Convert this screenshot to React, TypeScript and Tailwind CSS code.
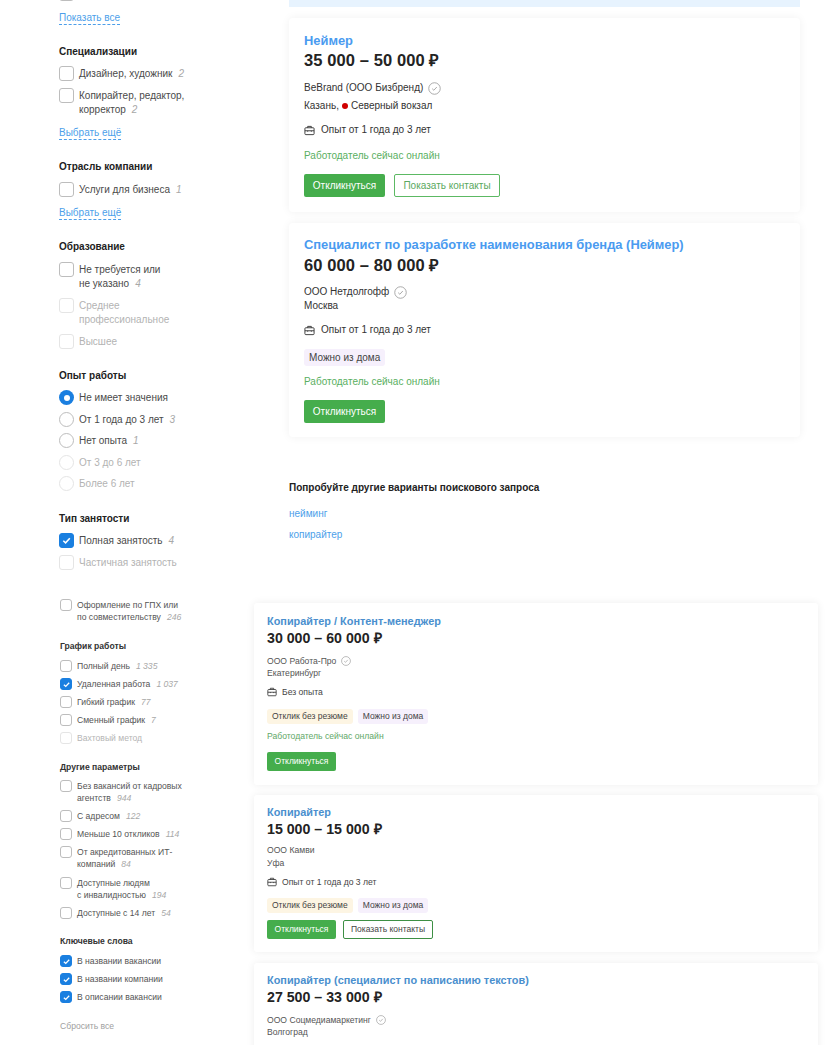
const F = "font-['Liberation_Sans',Arial,sans-serif]";

function Check({ on, dim, size = 15 }: { on?: boolean; dim?: boolean; size?: number }) {
  const box = size === 15 ? "w-[15px] h-[15px]" : "w-[12px] h-[12px]";
  return (
    <span className={`${box} shrink-0 rounded-[3px] border flex items-center justify-center ${on ? "bg-[#1a7fe0] border-[#1a7fe0]" : dim ? "bg-white border-[#e5e5e5]" : "bg-white border-[#bdbdbd]"}`}>
      {on && (
        <svg viewBox="0 0 12 12" className={size === 15 ? "w-[11px] h-[11px]" : "w-[9px] h-[9px]"} fill="none" stroke="#fff" strokeWidth="1.7">
          <path d="M2.5 6.3 5 8.6 9.6 3.6" />
        </svg>
      )}
    </span>
  );
}

function Radio({ on, dim }: { on?: boolean; dim?: boolean }) {
  return (
    <span className={`w-[15px] h-[15px] shrink-0 rounded-full flex items-center justify-center ${on ? "bg-[#1a7fe0]" : dim ? "border border-[#e5e5e5]" : "border border-[#bdbdbd]"}`}>
      {on && <span className="w-[6px] h-[6px] rounded-full bg-white" />}
    </span>
  );
}

function Row({ lines, n, on, dim, radio, h = 21.5 }: { lines: string[]; n?: string; on?: boolean; dim?: boolean; radio?: boolean; h?: number }) {
  return (
    <div className="flex gap-[5px] items-start" style={{ height: h }}>
      <div>{radio ? <Radio on={on} dim={dim} /> : <Check on={on} dim={dim} />}</div>
      <div className={`text-[10px] leading-[14px] pt-[1px] ${dim ? "text-[#b3b3b3]" : "text-[#4a4a4a]"}`}>
        {lines.map((l, i) => (
          <div key={i} className="whitespace-nowrap">
            {l}
            {i === lines.length - 1 && n && <i className="text-[#a8a8a8] ml-[6px] text-[10px]">{n}</i>}
          </div>
        ))}
      </div>
    </div>
  );
}

function Head({ children }: { children: string }) {
  return <div className="text-[10px] leading-[14px] font-bold text-[#222] h-[14px]">{children}</div>;
}

function More({ children }: { children: string }) {
  return <span className="text-[10px] leading-[13px] inline-block text-[#4d9fea] border-b border-dashed border-[#4d9fea]">{children}</span>;
}

function Verified({ size = 13 }: { size?: number }) {
  return (
    <svg viewBox="0 0 14 14" style={{ width: size, height: size }} fill="none" stroke="#9a9a9a" strokeWidth="0.9" className="shrink-0">
      <circle cx="7" cy="7" r="6.2" />
      <path d="M4.5 7.2 6.3 8.9 9.5 5.4" />
    </svg>
  );
}

function Case({ size = 11 }: { size?: number }) {
  return (
    <svg viewBox="0 0 12 12" style={{ width: size, height: size }} fill="none" stroke="#333" strokeWidth="1" className="shrink-0">
      <rect x="1" y="3" width="10" height="7.5" rx="1" />
      <path d="M4 3V1.5h4V3M1 6.3h10M4 6.3v1M8 6.3v1" />
    </svg>
  );
}

function TopCard({ title, salary, className, salaryClass, children }: { title: string; salary: string; className: string; salaryClass: string; children: React.ReactNode }) {
  return (
    <div className={`bg-white rounded-[4px] shadow-[0_0_10px_rgba(0,0,0,0.06)] px-[15px] ${className}`}>
      <div className="text-[12.9px] leading-[15px] font-bold text-[#4a9bf0] whitespace-nowrap">{title}</div>
      <div className={`text-[16.5px] leading-[20px] font-bold text-[#232323] tracking-[0.1px] ${salaryClass}`}>{salary}</div>
      {children}
    </div>
  );
}

function TopInfo({ children, className = "" }: { children: React.ReactNode; className?: string }) {
  return <div className={`flex items-center text-[10px] leading-[14px] text-[#333] ${className}`}>{children}</div>;
}

function GreenBtn({ small }: { small?: boolean }) {
  return <span className={`${small ? "w-[69px] h-[19px] text-[8.5px]" : "w-[81px] h-[23px] text-[10px]"} inline-flex items-center justify-center bg-[#45ad4c] rounded-[2px] text-white`}>Откликнуться</span>;
}

function Contacts({ small }: { small?: boolean }) {
  return <span className={`${small ? "w-[90px] h-[19px] text-[8.5px] border-[#3d8f44] text-[#444]" : "w-[106px] h-[23px] text-[10px] border-[#5cb963] text-[#5aa860]"} inline-flex items-center justify-center border rounded-[2px] bg-white`}>Показать контакты</span>;
}

function Tag({ children, tone }: { children: string; tone: "p" | "y" }) {
  return <span className={`inline-flex items-center h-[15px] px-[5px] rounded-[3px] text-[8.5px] text-[#444] ${tone === "p" ? "bg-[#f6f0fc]" : "bg-[#fdf5e3]"}`}>{children}</span>;
}

function SmallRow({ lines, n, on, dim, h = 18 }: { lines: string[]; n?: string; on?: boolean; dim?: boolean; h?: number }) {
  return (
    <div className="flex gap-[5px] items-start" style={{ height: h }}>
      <div><Check on={on} dim={dim} size={12} /></div>
      <div className={`text-[8.6px] leading-[12px] ${dim ? "text-[#b5b5b5]" : "text-[#555]"}`}>
        {lines.map((l, i) => (
          <div key={i} className="whitespace-nowrap">
            {l}
            {i === lines.length - 1 && n && <i className="text-[#a8a8a8] ml-[6px]">{n}</i>}
          </div>
        ))}
      </div>
    </div>
  );
}

function SmallHead({ children }: { children: string }) {
  return <div className="text-[8.6px] leading-[12px] h-[12px] font-bold text-[#333]">{children}</div>;
}

function BottomCard({ title, salary, company, city, exp, className, tight, noVerify, children }: { title: string; salary: string; company: string; city: string; exp?: string; className: string; tight?: boolean; noVerify?: boolean; children?: React.ReactNode }) {
  return (
    <div className={`bg-white rounded-[3px] shadow-[0_0_8px_rgba(0,0,0,0.07)] px-[13px] ${className}`}>
      <div className="text-[10.9px] leading-[13px] font-bold text-[#4a8fce] whitespace-nowrap">{title}</div>
      <div className="text-[14.2px] leading-[16px] font-bold text-[#232323] mt-[2px]">{salary}</div>
      <div className={`flex items-center gap-[5px] text-[8.6px] leading-[12px] text-[#555] ${tight ? "mt-[7px]" : "mt-[9px]"}`}>{company}{!noVerify && <Verified size={10} />}</div>
      <div className={`text-[8.6px] leading-[12px] text-[#555] ${tight ? "mt-[1px]" : ""}`}>{city}</div>
      {exp && <div className="flex items-center gap-[5px] text-[8.6px] leading-[12px] text-[#444] mt-[7px]"><Case size={10} /><span>{exp}</span></div>}
      {children}
    </div>
  );
}

export default function App() {
  return (
    <div className={`${F} w-[830px] h-[1045px] overflow-hidden bg-white`}>
      {/* upper part */}
      <div className="h-[590px] flex">
        <aside className="w-[289px] pl-[59px] shrink-0">
          <div className="h-[4px] overflow-hidden"><div className="-mt-[14px]"><Check /></div></div>
          <More>Показать все</More>
          <div className="mt-[17px]"><Head>Специализации</Head></div>
          <div className="mt-[7px]">
            <Row lines={["Дизайнер, художник"]} n="2" h={22} />
            <Row lines={["Копирайтер, редактор,", "корректор"]} n="2" h={36} />
          </div>
          <div className="mt-[-5px]"><More>Выбрать ещё</More></div>
          <div className="mt-[17px]"><Head>Отрасль компании</Head></div>
          <div className="mt-[8px]"><Row lines={["Услуги для бизнеса"]} n="1" h={22} /></div>
          <div className="mt-[-5px]"><More>Выбрать ещё</More></div>
          <div className="mt-[17px]"><Head>Образование</Head></div>
          <div className="mt-[8px]">
            <Row lines={["Не требуется или", "не указано"]} n="4" h={36} />
            <Row dim lines={["Среднее", "профессиональное"]} h={36} />
            <Row dim lines={["Высшее"]} h={22} />
          </div>
          <div className="mt-[13px]"><Head>Опыт работы</Head></div>
          <div className="mt-[7px]">
            <Row radio on lines={["Не имеет значения"]} />
            <Row radio lines={["От 1 года до 3 лет"]} n="3" />
            <Row radio lines={["Нет опыта"]} n="1" />
            <Row radio dim lines={["От 3 до 6 лет"]} />
            <Row radio dim lines={["Более 6 лет"]} />
          </div>
          <div className="mt-[14px]"><Head>Тип занятости</Head></div>
          <div className="mt-[7px]">
            <Row on lines={["Полная занятость"]} n="4" h={22} />
            <Row dim lines={["Частичная занятость"]} h={22} />
          </div>
        </aside>
        <main className="w-[511px]">
          <div className="h-[7px] bg-[#e7f3fe]" />
          <TopCard className="mt-[11px] h-[194px] pt-[15px]" salaryClass="mt-[2px]" title="Неймер" salary="35 000 – 50 000 ₽">
            <TopInfo className="mt-[11px] gap-[5px]">BeBrand (ООО Бизбренд)<Verified /></TopInfo>
            <TopInfo className="mt-[4px]">Казань,<span className="w-[6px] h-[6px] rounded-full bg-[#d00000] mx-[3px]" />Северный вокзал</TopInfo>
            <TopInfo className="mt-[10px] gap-[6px]"><Case />Опыт от 1 года до 3 лет</TopInfo>
            <div className="text-[10px] leading-[14px] text-[#5aaf61] mt-[12px]">Работодатель сейчас онлайн</div>
            <div className="flex gap-[9px] mt-[11px]"><GreenBtn /><Contacts /></div>
          </TopCard>
          <TopCard className="mt-[11px] h-[214px] pt-[14px]" salaryClass="mt-[3px]" title="Специалист по разработке наименования бренда (Неймер)" salary="60 000 – 80 000 ₽">
            <TopInfo className="mt-[10px] gap-[5px]">ООО Нетдолгофф<Verified /></TopInfo>
            <TopInfo>Москва</TopInfo>
            <TopInfo className="mt-[10px] gap-[6px]"><Case />Опыт от 1 года до 3 лет</TopInfo>
            <div className="mt-[7px]"><span className="inline-flex items-center h-[17px] px-[5px] rounded-[3px] bg-[#f6f0fc] text-[10px] text-[#444]">Можно из дома</span></div>
            <div className="text-[10px] leading-[14px] text-[#5aaf61] mt-[7px]">Работодатель сейчас онлайн</div>
            <div className="mt-[9px]"><GreenBtn /></div>
          </TopCard>
          <div className="text-[10px] leading-[14px] font-bold text-[#222] mt-[44px]">Попробуйте другие варианты поискового запроса</div>
          <div className="text-[10px] leading-[14px] text-[#4d9fea] mt-[12px]">нейминг</div>
          <div className="text-[10px] leading-[14px] text-[#4d9fea] mt-[7px]">копирайтер</div>
        </main>
      </div>
      {/* lower part */}
      <div className="h-[455px] flex">
        <aside className="w-[254px] pl-[60px] shrink-0">
          <div className="mt-[9px]"><SmallRow lines={["Оформление по ГПХ или", "по совместительству"]} n="246" h={26} /></div>
          <div className="mt-[15px]"><SmallHead>График работы</SmallHead></div>
          <div className="mt-[8px]">
            <SmallRow lines={["Полный день"]} n="1 335" />
            <SmallRow on lines={["Удаленная работа"]} n="1 037" />
            <SmallRow lines={["Гибкий график"]} n="77" />
            <SmallRow lines={["Сменный график"]} n="7" />
            <SmallRow dim lines={["Вахтовый метод"]} />
          </div>
          <div className="mt-[11px]"><SmallHead>Другие параметры</SmallHead></div>
          <div className="mt-[7px]">
            <SmallRow lines={["Без вакансий от кадровых", "агентств"]} n="944" h={30} />
            <SmallRow lines={["С адресом"]} n="122" />
            <SmallRow lines={["Меньше 10 откликов"]} n="114" />
            <SmallRow lines={["От акредитованных ИТ-", "компаний"]} n="84" h={31} />
            <SmallRow lines={["Доступные людям", "с инвалидностью"]} n="194" h={30} />
            <SmallRow lines={["Доступные с 14 лет"]} n="54" />
          </div>
          <div className="mt-[10px]"><SmallHead>Ключевые слова</SmallHead></div>
          <div className="mt-[8px]">
            <SmallRow on lines={["В названии вакансии"]} />
            <SmallRow on lines={["В названии компании"]} />
            <SmallRow on lines={["В описании вакансии"]} />
          </div>
          <div className="text-[8.6px] leading-[12px] text-[#a0a0a0] mt-[11px]">Сбросить все</div>
        </aside>
        <main className="w-[564px]">
          <BottomCard className="mt-[13px] h-[182px] pt-[12px]" title="Копирайтер / Контент-менеджер" salary="30 000 – 60 000 ₽" company="ООО Работа-Про" city="Екатеринбург" exp="Без опыта">
            <div className="flex gap-[5px] mt-[11px]"><Tag tone="y">Отклик без резюме</Tag><Tag tone="p">Можно из дома</Tag></div>
            <div className="text-[8.6px] leading-[12px] text-[#62a868] mt-[6px]">Работодатель сейчас онлайн</div>
            <div className="mt-[5px]"><GreenBtn small /></div>
          </BottomCard>
          <BottomCard className="mt-[10px] h-[157px] pt-[11px]" tight noVerify title="Копирайтер" salary="15 000 – 15 000 ₽" company="ООО Камви" city="Уфа" exp="Опыт от 1 года до 3 лет">
            <div className="flex gap-[5px] mt-[10px]"><Tag tone="y">Отклик без резюме</Tag><Tag tone="p">Можно из дома</Tag></div>
            <div className="flex gap-[7px] mt-[7px]"><GreenBtn small /><Contacts small /></div>
          </BottomCard>
          <BottomCard className="mt-[11px] h-[100px] pt-[11px]" title="Копирайтер (специалист по написанию текстов)" salary="27 500 – 33 000 ₽" company="ООО Соцмедиамаркетинг" city="Волгоград" />
        </main>
      </div>
    </div>
  );
}
